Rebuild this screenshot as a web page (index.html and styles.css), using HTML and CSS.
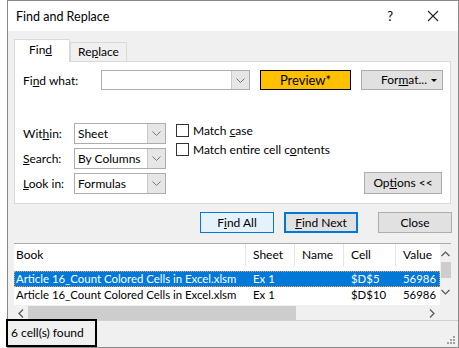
FILE: index.html
```html
<!DOCTYPE html>
<html lang="en">
<head>
    <meta charset="UTF-8">
    <title>Find and Replace</title>
    <link rel="stylesheet" href="styles.css">
</head>
<body>
    <div class="dialog">
        <div class="titlebar">
            <span class="title">Find and Replace</span>
            <span class="help">?</span>
            <svg class="close-x" width="12" height="12" viewBox="0 0 12 12"><path d="M1 1L11 11M11 1L1 11" stroke="#222" stroke-width="1.1" fill="none"/></svg>
        </div>
        <div class="tabs">
            <div class="tab active">Fin<u>d</u></div>
            <div class="tab">Re<u>p</u>lace</div>
        </div>
        <div class="panel">
            <div class="find-row">
                <label class="lbl">Fi<u>n</u>d what:</label>
                <div class="combo wide">
                    <span class="val"></span>
                    <span class="drop"><svg width="9" height="5" viewBox="0 0 9 5"><path d="M0.5 0.5L4.5 4.5L8.5 0.5" stroke="#777" fill="none"/></svg></span>
                </div>
                <div class="preview">Preview*</div>
                <div class="btn format">For<u>m</u>at... <span class="caret"></span></div>
            </div>
            <div class="opts">
                <div class="opt-grid">
                    <label class="lbl">Wit<u>h</u>in:</label>
                    <div class="combo">
                        <span class="val">Sheet</span>
                        <span class="drop"><svg width="9" height="5" viewBox="0 0 9 5"><path d="M0.5 0.5L4.5 4.5L8.5 0.5" stroke="#777" fill="none"/></svg></span>
                    </div>
                    <label class="lbl"><u>S</u>earch:</label>
                    <div class="combo">
                        <span class="val">By Columns</span>
                        <span class="drop"><svg width="9" height="5" viewBox="0 0 9 5"><path d="M0.5 0.5L4.5 4.5L8.5 0.5" stroke="#777" fill="none"/></svg></span>
                    </div>
                    <label class="lbl"><u>L</u>ook in:</label>
                    <div class="combo">
                        <span class="val">Formulas</span>
                        <span class="drop"><svg width="9" height="5" viewBox="0 0 9 5"><path d="M0.5 0.5L4.5 4.5L8.5 0.5" stroke="#777" fill="none"/></svg></span>
                    </div>
                </div>
                <div class="checks">
                    <div class="check"><span class="box"></span><span>Match <u>c</u>ase</span></div>
                    <div class="check"><span class="box"></span><span>Match entire cell c<u>o</u>ntents</span></div>
                </div>
                <div class="btn options">Op<u>t</u>ions &lt;&lt;</div>
            </div>
        </div>
        <div class="actions">
            <div class="btn hover">F<u>i</u>nd All</div>
            <div class="btn default"><u>F</u>ind Next</div>
            <div class="btn close">Close</div>
        </div>
        <div class="results">
            <div class="list">
                <div class="table">
                    <div class="row head">
                        <div>Book</div><div>Sheet</div><div>Name</div><div>Cell</div><div>Value</div>
                    </div>
                    <div class="row sel">
                        <div>Article 16_Count Colored Cells in Excel.xlsm</div><div>Ex 1</div><div></div><div>$D$5</div><div>56986</div>
                    </div>
                    <div class="row">
                        <div>Article 16_Count Colored Cells in Excel.xlsm</div><div>Ex 1</div><div></div><div>$D$10</div><div>56986</div>
                    </div>
                </div>
                <div class="vscroll">
                    <svg width="9" height="6" viewBox="0 0 9 6"><path d="M0.5 5L4.5 1L8.5 5" stroke="#555" stroke-width="1.2" fill="none"/></svg>
                    <div class="vthumb"></div>
                    <svg class="down" width="9" height="6" viewBox="0 0 9 6"><path d="M0.5 1L4.5 5L8.5 1" stroke="#555" stroke-width="1.2" fill="none"/></svg>
                </div>
            </div>
            <div class="hscroll">
                <svg width="6" height="9" viewBox="0 0 6 9"><path d="M5 0.5L1 4.5L5 8.5" stroke="#555" stroke-width="1.2" fill="none"/></svg>
                <div class="hthumb"></div>
                <svg class="right" width="6" height="9" viewBox="0 0 6 9"><path d="M1 0.5L5 4.5L1 8.5" stroke="#555" stroke-width="1.2" fill="none"/></svg>
            </div>
        </div>
        <div class="status">
            <span class="found">6 cell(s) found</span>
            <svg class="grip" width="8" height="8" viewBox="0 0 8 8" fill="#a0a0a0">
                <rect x="6" y="0" width="2" height="2"/><rect x="3" y="3" width="2" height="2"/><rect x="6" y="3" width="2" height="2"/>
                <rect x="0" y="6" width="2" height="2"/><rect x="3" y="6" width="2" height="2"/><rect x="6" y="6" width="2" height="2"/>
            </svg>
        </div>
    </div>
</body>
</html>
```

FILE: styles.css
```css
*{
    margin: 0;
    padding: 0;
    box-sizing: border-box;
}
body{
    background: #fff;
    font-family: "Segoe UI", "Lato", "Noto Sans", sans-serif;
    font-size: 12px;
    color: #000;
}
u{
    text-decoration: underline;
    text-underline-offset: 1px;
}
.dialog{
    margin-left: 7px;
    width: 452px;
    height: 348px;
    border: 1px solid #8a8a8a;
    background: #f0f0f0;
    display: flex;
    flex-direction: column;
}
.titlebar{
    height: 30px;
    background: #fff;
    display: flex;
    align-items: center;
    padding-left: 8px;
    font-size: 12.5px;
}
.title{
    flex: 1;
}
.help{
    font-size: 13px;
    margin-right: 34px;
}
.close-x{
    margin-right: 19px;
}
.tabs{
    display: flex;
    align-items: flex-end;
    padding: 7px 0 0 6px;
    height: 30px;
}
.tab{
    height: 19px;
    padding: 0 7px;
    border: 1px solid #d9d9d9;
    border-bottom: none;
    background: #f0f0f0;
    line-height: 17px;
}
.tab.active{
    height: 23px;
    background: #fff;
    padding: 0 14px 0 14px;
    line-height: 20px;
    position: relative;
    top: 1px;
    width: 56px;
}
.panel{
    margin: 0 7px 0 6px;
    height: 143px;
    background: #fff;
    border: 1px solid #d9d9d9;
    padding: 8px 0 0 8px;
}
.find-row{
    display: flex;
    align-items: center;
    height: 20px;
}
.find-row .lbl{
    width: 78px;
}
.combo{
    height: 21px;
    border: 1px solid #adadad;
    background: #fff;
    display: flex;
    align-items: stretch;
}
.combo .val{
    flex: 1;
    padding-left: 3px;
    line-height: 19px;
}
.combo .drop{
    width: 18px;
    background: #e6e6e6;
    border-left: 1px solid #c8c8c8;
    display: flex;
    align-items: center;
    justify-content: center;
}
.combo.wide{
    width: 149px;
    height: 20px;
}
.preview{
    margin-left: 10px;
    width: 91px;
    height: 20px;
    background: #ffc000;
    border: 1px solid #000;
    text-align: center;
    line-height: 18px;
    font-size: 13px;
}
.btn{
    height: 20px;
    background: #e1e1e1;
    border: 1px solid #adadad;
    text-align: center;
    line-height: 18px;
}
.format{
    margin-left: 10px;
    width: 82px;
    padding-left: 4px;
    position: relative;
}
.caret{
    position: absolute;
    right: 5px;
    top: 8px;
    border-left: 3px solid transparent;
    border-right: 3px solid transparent;
    border-top: 3px solid #000;
}
.opts{
    display: flex;
    margin-top: 33px;
    position: relative;
}
.opt-grid{
    display: grid;
    grid-template-columns: 51px 92px;
    row-gap: 4px;
    align-items: center;
}
.opt-grid .combo{
    height: 21px;
}
.checks{
    margin-left: 10px;
    display: flex;
    flex-direction: column;
    gap: 5px;
}
.check{
    display: flex;
    align-items: center;
    height: 14px;
}
.box{
    width: 13px;
    height: 13px;
    border: 1px solid #333;
    margin-right: 4px;
    background: #fff;
}
.options{
    margin-left: auto;
    margin-right: 8px;
    align-self: flex-end;
    width: 78px;
    height: 22px;
    line-height: 20px;
}
.actions{
    display: flex;
    padding: 8px 0 0 192px;
    height: 39px;
    gap: 10px;
}
.actions .btn{
    width: 74px;
    height: 21px;
    line-height: 19px;
}
.btn.hover{
    background: #e5f1fb;
    border-color: #0078d7;
}
.btn.default{
    border: 2px solid #0078d7;
    line-height: 17px;
}
.btn.close{
    margin-left: 10px;
}
.results{
    margin: 0 7px 0 6px;
    height: 77px;
    background: #fff;
    border-top: 1px solid #adadad;
}
.list{
    display: flex;
    height: 61px;
}
.table{
    flex: 1;
    overflow: hidden;
}
.row{
    display: grid;
    grid-template-columns: 232px 49px 49px 52px 1fr;
    height: 16px;
    line-height: 16px;
    white-space: nowrap;
    font-size: 11.4px;
}
.row div{
    padding-left: 7px;
    overflow: hidden;
}
.row div:first-child{
    padding-left: 2px;
}
.row.head{
    height: 27px;
    line-height: 26px;
    font-size: 12px;
}
.row.head div{
    height: 22px;
    line-height: 22px;
    border-right: 1px solid #e5e5e5;
}
.row.head div:last-child{
    border-right: none;
}
.row.sel{
    background: #0078d7;
    color: #fff;
    outline: 1px dotted #e8a060;
    outline-offset: -1px;
}
.vscroll{
    width: 11px;
    background: #f0f0f0;
    display: flex;
    flex-direction: column;
    align-items: center;
    padding-top: 7px;
}
.vthumb{
    width: 10px;
    height: 16px;
    background: #cdcdcd;
    margin-top: 5px;
}
.vscroll .down{
    margin-top: 11px;
}
.hscroll{
    height: 16px;
    background: #f0f0f0;
    display: flex;
    align-items: center;
    padding-left: 4px;
}
.hthumb{
    width: 268px;
    height: 15px;
    background: #cdcdcd;
    margin-left: 4px;
}
.hscroll .right{
    margin-left: 133px;
}
.status{
    flex: 1;
    position: relative;
    border-top: 1px solid #d0d0d0;
}
.found{
    position: absolute;
    left: -2px;
    top: -2px;
    width: 91px;
    height: 28px;
    border: 2px solid #000;
    padding-left: 3px;
    line-height: 24px;
}
.grip{
    position: absolute;
    right: 3px;
    bottom: 3px;
}
```
